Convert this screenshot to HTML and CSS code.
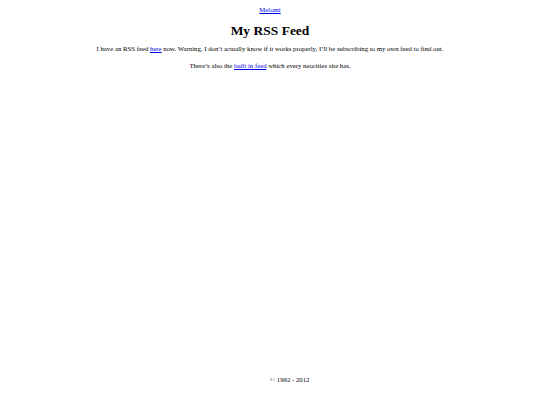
FILE: index.html
```html
<!DOCTYPE html>
<html>
<head>
<meta charset="utf-8">
<title>My RSS Feed</title>
<link rel="stylesheet" href="styles.css">
</head>
<body>
<div class="page">
  <main class="content">
    <nav class="nav"><a href="#">Melomi</a></nav>
    <h1 class="title">My RSS Feed</h1>
    <p class="text">I have an RSS feed <a href="#">here</a> now. Warning, I don’t actually know if it works properly, I’ll be subscribing to my own feed to find out.</p>
    <p class="text">There’s also the <a href="#">built in feed</a> which every neocities site has.</p>
  </main>
  <footer class="footer">© 1992 - 2012</footer>
</div>
</body>
</html>
```

FILE: styles.css
```css
html, body {
  margin: 0;
  padding: 0;
  background: #ffffff;
}
body {
  font-family: "Liberation Serif", "Times New Roman", serif;
  font-size: 6.75px;
  line-height: 1.4;
  color: #000000;
}
a {
  color: #0000ee;
}
.page {
  display: flex;
  flex-direction: column;
  min-height: 100vh;
}
.content {
  text-align: center;
  padding-top: 5px;
}
.nav {
  margin: 0;
}
.title {
  font-size: 13.5px;
  font-weight: bold;
  line-height: 15.5px;
  margin: 8.55px 0 5.85px;
}
.text {
  margin: 0 0 6.75px;
}
.footer {
  margin-top: auto;
  padding-left: 50%;
  padding-bottom: 21px;
}
```
